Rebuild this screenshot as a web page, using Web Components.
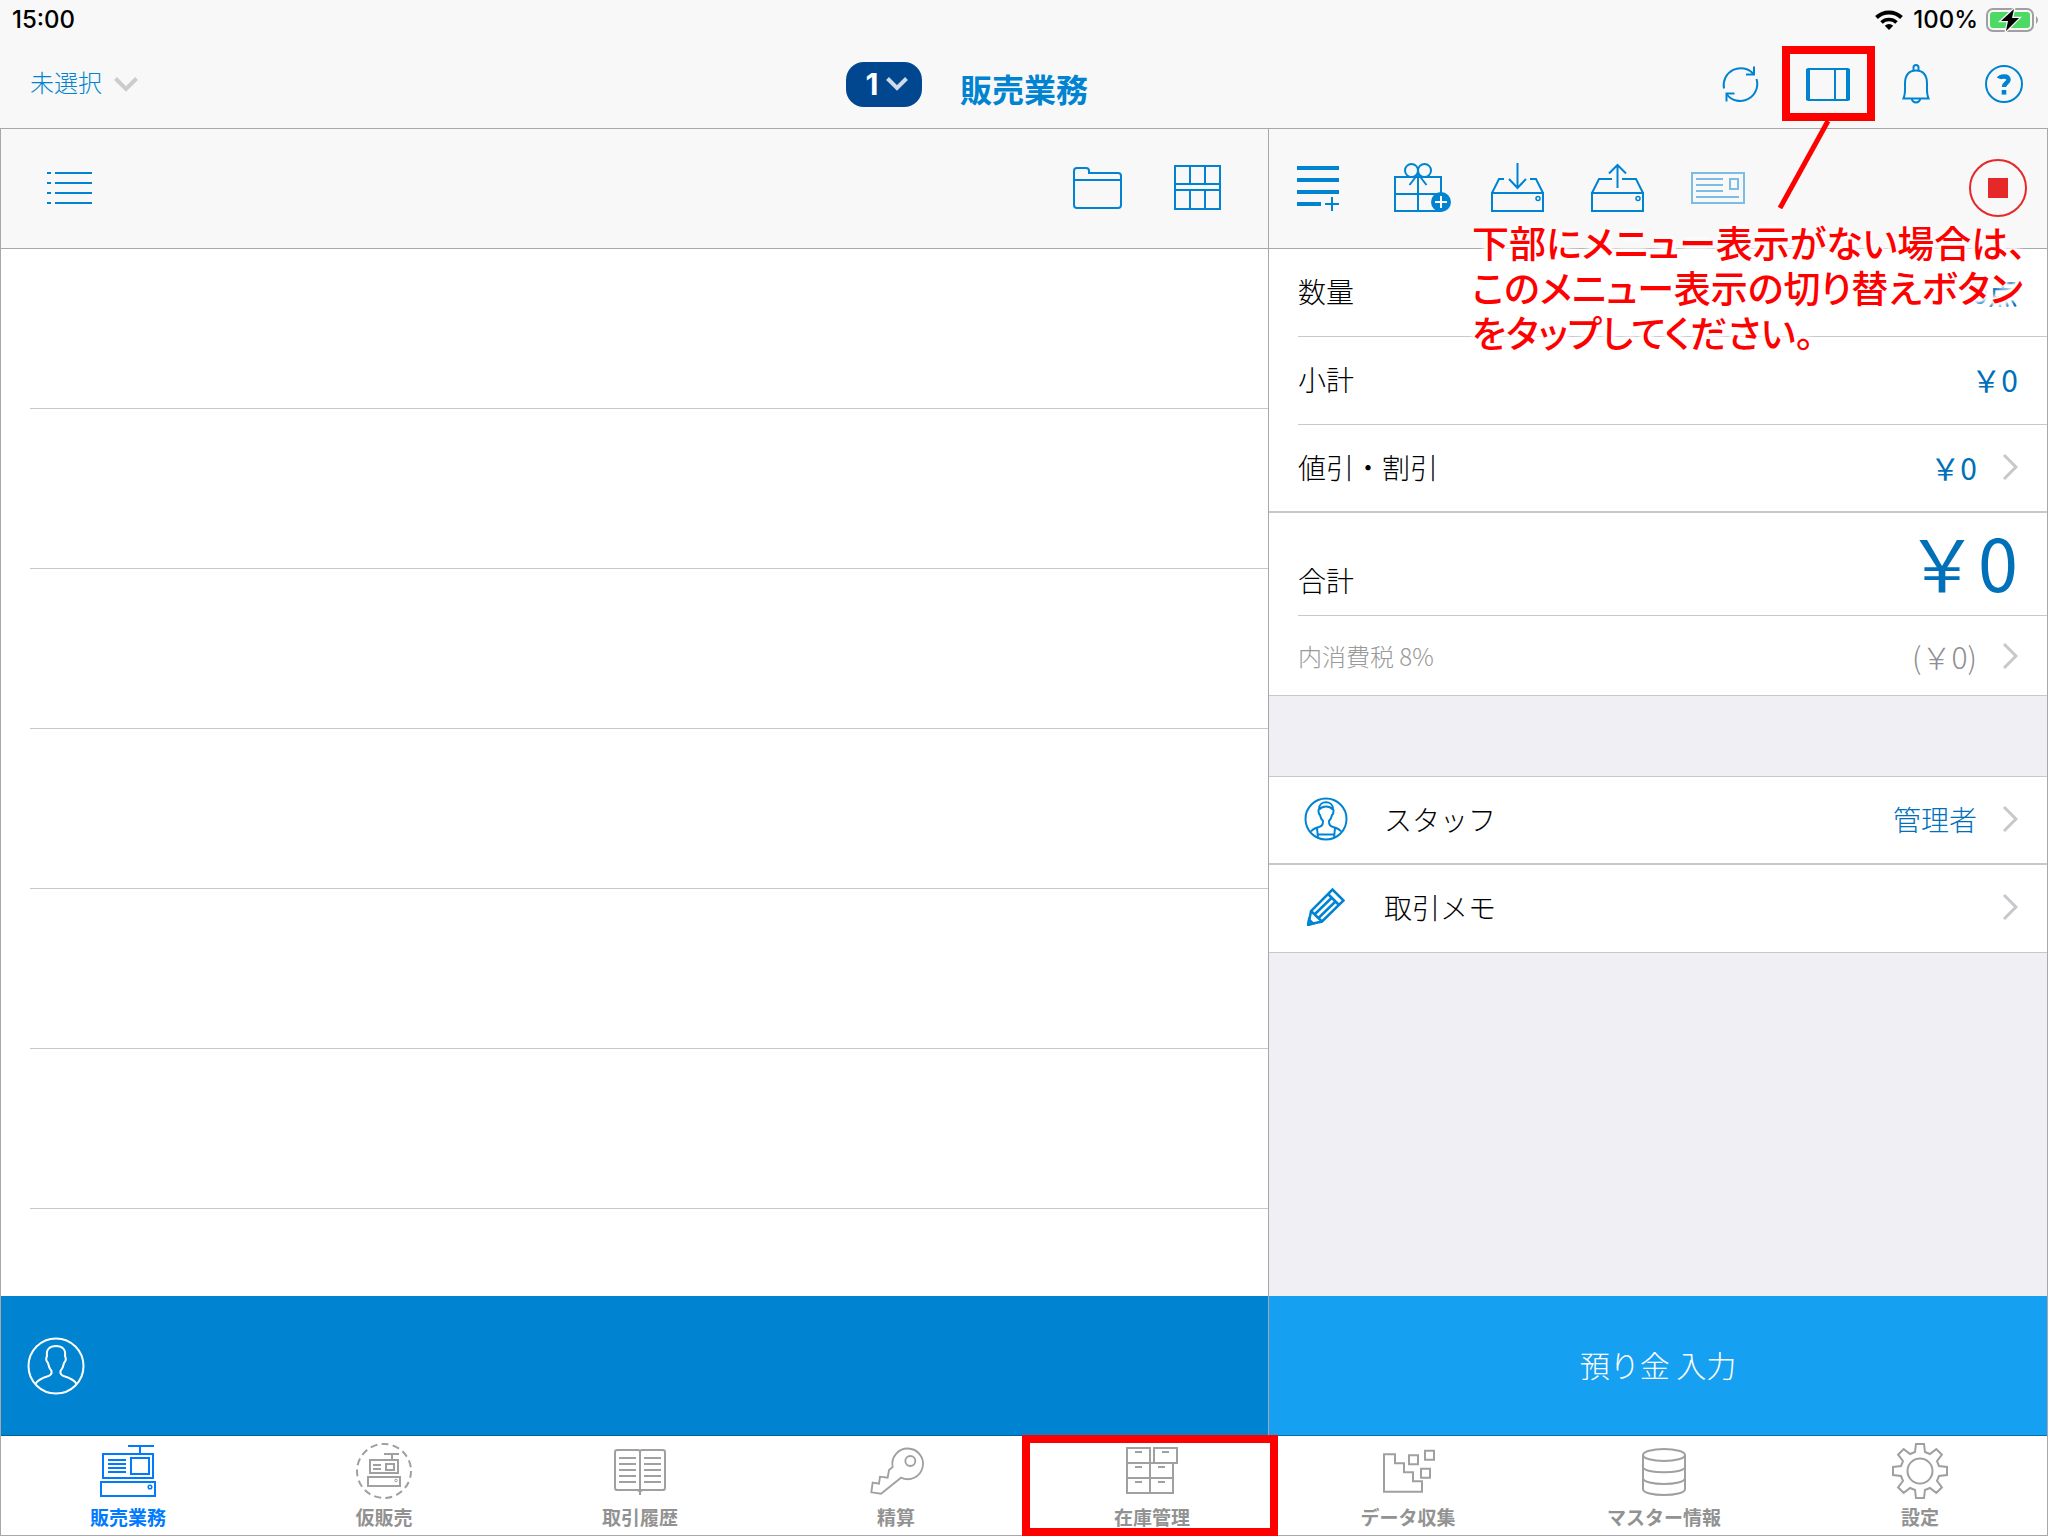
<!DOCTYPE html>
<html lang="ja">
<head>
<meta charset="utf-8">
<meta name="viewport" content="width=device-width, initial-scale=1">
<title>販売業務</title>
<style>
  html, body { margin: 0; height: 100%; }
  body {
    --blue: #0084d1;
    --value: #0070b8;
    --frame: #a8a8aa;
    --line: #c8c7cc;
    --bar: #f8f8f8;
    --ui: Inter, "Noto Sans CJK JP", sans-serif;
    font-family: "Noto Sans CJK JP", sans-serif;
    color: #000;
    background: #fff;
  }
</style>
</head>
<body>
<pos-app></pos-app>

<script>
const gear = (() => {
  const tooth = [[-5, -19], [-4, -27], [4, -27], [5, -19]];
  const pts = [];
  for (let k = 0; k < 8; k++) {
    const a = k * Math.PI / 4, c = Math.cos(a), s = Math.sin(a);
    for (const [x, y] of tooth) pts.push((30 + x * c - y * s).toFixed(1) + ',' + (30 + x * s + y * c).toFixed(1));
  }
  return pts.join(' ');
})();

const svg = (w, h, body, opt = '') =>
  `<svg width="${w}" height="${h}" ${/viewBox/.test(opt) ? '' : `viewBox="0 0 ${w} ${h}"`} fill="none" stroke="currentColor" stroke-width="2" ${opt} aria-hidden="true">${body}</svg>`;

const ICONS = {
  chevronDown: svg(24, 16, '<path d="M1.500 2.500 12 13 22.500 2.500" stroke-width="4"/>'),
  chevronSmall: svg(22, 16, '<path d="M1.500 2.500 11 12 20.500 2.500" stroke-width="4"/>'),
  chevronRight: svg(16, 28, '<path d="M2 2 14 14 2 26" stroke-width="3"/>'),
  wifi: svg(28, 20, '<path d="M1.500 7.500a18 18 0 0 1 25 0" stroke-width="4"/><path d="M6.500 12.500a11 11 0 0 1 15 0" stroke-width="3.600"/><path d="M14 20 9.800 15.700a6 6 0 0 1 8.400 0z" fill="currentColor" stroke="none"/>'),
  battery: svg(54, 24, '<rect x="1" y="1" width="46" height="22" rx="6" stroke="#a0a0a2"/><rect x="4" y="4" width="40" height="16" rx="3" fill="#4cd964" stroke="none"/><path d="M50 8a5 5 0 0 1 0 8z" fill="#a0a0a2" stroke="none"/><path d="M28 1 15 13h7l-2 10L33 10h-7z" fill="#000" stroke="#f8f8f8" stroke-width="2.500" paint-order="stroke"/>'),
  refresh: svg(40, 40, '<path d="M4 24.500A17 17 0 0 1 33.500 10"/><path d="M36.500 15A17 17 0 0 1 6.500 30"/><path d="M34 2.500v8h-8"/><path d="M6.500 37.500v-8h8"/>'),
  panel: svg(44, 33, '<rect x="1" y="1" width="42" height="31" rx="1.500"/><path d="M2 1v31M42 1v31" stroke-width="4"/><path d="M29 1v31"/>'),
  bell: svg(28, 40, '<path d="M1.500 34.500C3.500 30 3 27 3 20 3 11 7 6.500 14 6.500S25 11 25 20c0 7-.500 10 1.500 14.500z"/><path d="M11.500 7V3.500a2.500 2.500 0 0 1 5 0V7"/><path d="M9.800 35a4.300 4.300 0 0 0 8.400 0"/>'),
  help: svg(38, 38, '<circle cx="19" cy="19" r="18"/><path d="M14 13.500c1-2.500 9.500-3.500 9.500 1.200 0 3.500-4.500 3.300-4.500 7.300" stroke-width="4.500"/><path d="M16.700 25h4.600v4.600h-4.600z" fill="currentColor" stroke="none"/>'),
  list: svg(45, 32, '<path d="M0 1h4M8 1h37M0 11h4M8 11h37M0 21h4M8 21h37M0 31h4M8 31h37"/>'),
  folder: svg(49, 42, '<path d="M1 13V4a3 3 0 0 1 3-3h9a3 3 0 0 1 3 3v2h29a3 3 0 0 1 3 3v29a3 3 0 0 1-3 3H4a3 3 0 0 1-3-3zM1 13h47"/>'),
  grid: svg(47, 45, '<path d="M1 1h45v43H1zM1 19h45M1 25h45M16 1v18M31 1v18M16 25v19M31 25v19"/>'),
  listPlus: svg(44, 46, '<path d="M0 3h42M0 15h42M0 27h42M0 39h24" stroke-width="4"/><path d="M28 39h14M35 32v14"/>'),
  gift: svg(68, 50, '<path d="M10 14h46v34H10zM10 31h46M33 14v34"/><circle cx="26.500" cy="7.500" r="6.500"/><circle cx="39.500" cy="7.500" r="6.500"/><path d="M33 11 24.500 22M33 11l8.500 11"/><circle cx="56" cy="39" r="10" fill="currentColor" stroke="none"/><path d="M50 39h12M56 33v12" stroke="#fff"/>'),
  drawerIn: svg(56, 50, '<path d="M1 30h51v18H1zM1 30 8 16h5M52 30 45 16h-6M26.500 0v25M18 16l8.500 9 8.500-9"/><circle cx="47" cy="35.500" r="2" stroke-width="1.500"/>'),
  drawerOut: svg(56, 50, '<path d="M1 30h51v18H1zM1 30 8 16h13M52 30 45 16H31M26.500 25V2M18 10.500 26.500 2l8.500 8.500"/><circle cx="47" cy="35.500" r="2" stroke-width="1.500"/>'),
  receipt: svg(56, 32, '<path d="M1 1h52v30H1zM5 7h27M5 13h27M5 19h27M5 25h43M39 7h8v10h-8z"/>'),
  stop: svg(58, 58, '<circle cx="29" cy="29" r="28"/><path d="M19 19h20v20H19z" fill="currentColor" stroke="none"/>'),
  staff: svg(44, 44, '<circle cx="22" cy="22" r="20.500"/><path d="M15 12c0-9 14-9 14 0 1 1 .500 5-1 6-.500 3-2 5-3 6 0 4 1 5 4 6 5 1.500 7 2.500 8 4.500M15 12c-1 1-.500 5 1 6 .500 3 2 5 3 6 0 4-1 5-4 6-5 1.500-7 2.500-8 4.500M15 12.500c4-4 10-4 14 0M13 31l1 10M31 31l-1 10M13.500 37.500h17"/>'),
  pencil: svg(38, 38, '<path d="M1.500 36.500 4 23 25.500 1.500l11 11L15 33.500zM4 23l11 10.500M21 6l11 11M8 26 25 9.500M11.500 30 29 13"/><path d="m1 37 1-5.500 4 4z" fill="currentColor"/>', 'style="stroke-width:2.500"'),
  person: svg(58, 58, '<circle cx="29" cy="29" r="27.500"/><path d="M8.500 47c2-4 8-6.500 13-8 3-1.200 3.500-2.500 3-5-2-2.500-3-5-3.500-8-2-2-2-5-1-7-1-7 3-10 9-10s10 3 9 10c1 2 1 5-1 7-.500 3-1.500 5.500-3.500 8-.500 2.500 0 3.800 3 5 5 1.500 11 4 13 8"/>'),
  register: svg(60, 60, '<path d="M30 5h26M42 5v8M5 13h50v24H5zM10 19h18M10 23h18M10 27h18M10 31h18M33 17h18v16H33zM3 41h54v14H3z"/><circle cx="52" cy="46" r="1.800" stroke-width="1.500"/>'),
  hold: svg(60, 60, '<circle cx="30" cy="30" r="27" stroke-dasharray="7 4.300"/><path d="M30 13h15M38 13v6M16 19h28v13H16zM19 24h8M19 28h8M32 23h8v6h-8zM14 36h32v9H14z"/><circle cx="42" cy="39.500" r="1.300" stroke-width="1"/>'),
  book: svg(60, 60, '<path d="M237 225V96q0-6-6-6h-62q-7 0-7 7v106q0 7 7 7h136q7 0 7-7V97q0-7-7-7h-62q-6 0-6 6M230 212h14M174 114h51M174 132h51M174 150h51M174 168h51M174 186h51M249 114h51M249 132h51M249 150h51M249 168h51M249 186h51"/>', 'viewBox="147 63 180 180" style="stroke-width:6"'),
  key: svg(60, 60, '<path d="M1020 173 960 221 931 217 935 188 954 191 957 170 980 173 984 150 995 141A46 46 0 1 1 1020 173z"/><circle cx="1048" cy="123" r="15"/>', 'viewBox="915 63 180 180" style="stroke-width:5.500"'),
  cabinet: svg(60, 60, '<path d="M378 84h69v135h-69zM459 84h69v45h-69zM378 129h138v90H378zM378 174h138M402 96h21M483 96h21M402 141h21M471 141h21M402 186h21M471 186h21"/>', 'viewBox="363 63 180 180" style="stroke-width:6"'),
  data: svg(60, 60, '<path d="M1149 103h33v27h27v27h27v27h27v31h-114zM1224 106h27v27h-27zM1272 92h27v27h-27zM1260 146h27v27h-27z"/>', 'viewBox="1131 63 180 180" style="stroke-width:6"'),
  database: svg(60, 60, '<ellipse cx="30" cy="14" rx="21" ry="6"/><path d="M9 14v34c0 8 42 8 42 0V14M9 26c0 7 42 7 42 0M9 37c0 8 42 8 42 0"/>'),
  gear: svg(60, 60, `<polygon points="${gear}"/><circle cx="30" cy="30" r="12.500"/>`)
};

/* Base class: renders its static template into an open shadow root. */
class PosElement extends HTMLElement {
  connectedCallback() {
    if (this.shadowRoot) return;
    const tpl = document.createElement('template');
    tpl.innerHTML = `<style>
      :host { display: block; box-sizing: border-box; }
      *, ::before, ::after { box-sizing: border-box; }
      svg { display: block; flex: none; }
      button { margin: 0; padding: 0; border: 0; background: none; font: inherit; color: inherit; cursor: pointer; }
      ${this.css()}</style>${this.html()}`;
    this.attachShadow({ mode: 'open' }).append(tpl.content.cloneNode(true));
  }
  css() { return ''; }
  html() { return '<slot></slot>'; }
}

customElements.define('icon-button', class extends PosElement {
  css() { return `
    :host { position: relative; color: var(--blue); }
    button { display: flex; align-items: center; justify-content: center; width: 100%; height: 100%; }
    button:disabled { opacity: .5; cursor: default; }
    :host([marked])::after { content: ""; position: absolute; inset: 6px -3px 7px -2px; border: 8px solid #f00; pointer-events: none; }`; }
  html() { return `<button type="button" aria-label="${this.getAttribute('label')}" ${this.hasAttribute('disabled') ? 'disabled' : ''}>${ICONS[this.getAttribute('icon')]}</button>`; }
});

customElements.define('status-bar', class extends PosElement {
  css() { return `
    :host { display: flex; justify-content: space-between; align-items: center; height: 40px; padding: 0 8px 0 12px; font: 500 24px/40px var(--ui); }
    div { display: flex; align-items: center; gap: 8px; }
    .power { gap: 10px; }`; }
  html() { return `<span>15:00</span><div class="power">${ICONS.wifi}<div><span>100%</span>${ICONS.battery}</div></div>`; }
});

customElements.define('nav-bar', class extends PosElement {
  css() { return `
    :host { display: grid; grid-template-columns: 1fr auto 1fr; height: 88px; color: var(--blue); }
    .start { display: flex; justify-content: space-between; align-items: center; padding: 0 38px 0 30px; }
    .customer { display: flex; align-items: center; gap: 12px; font-size: 24px; line-height: 32px; font-weight: var(--text); }
    .customer span { padding-bottom: 4px; }
    .customer svg { color: #ccc; }
    .slot { display: flex; align-items: center; justify-content: center; gap: 8px; width: 76px; height: 45px; padding-left: 6px; border-radius: 18px; background: #00478f; color: #fff; font: 700 30px/45px var(--ui); }
    .slot svg { color: #ccdae9; }
    h1 { margin: 0; padding-top: 10px; font-size: 32px; line-height: 76px; font-weight: 700; }
    nav { display: flex; justify-content: flex-end; }
    icon-button { width: 88px; }`; }
  html() { return `
    <div class="start">
      <button class="customer" type="button"><span>未選択</span>${ICONS.chevronDown}</button>
      <button class="slot" type="button"><span>1</span>${ICONS.chevronSmall}</button>
    </div>
    <h1>販売業務</h1>
    <nav>
      <icon-button icon="refresh" label="更新"></icon-button>
      <icon-button icon="panel" label="メニュー表示" marked></icon-button>
      <icon-button icon="bell" label="通知"></icon-button>
      <icon-button icon="help" label="ヘルプ"></icon-button>
    </nav>`; }
});

customElements.define('tool-bar', class extends PosElement {
  css() { return `
    :host { display: flex; height: 120px; padding-bottom: 2px; background: var(--bar); border-bottom: 1px solid var(--frame); }`; }
});

customElements.define('sale-panel', class extends PosElement {
  css() { return `
    :host { display: flex; flex-direction: column; }
    tool-bar { padding: 0 21px 2px 18px; }
    icon-button { width: 100px; }
    .first { margin-right: auto; }
    ul { flex: 1; margin: 0; padding: 0 0 0 29px; list-style: none; background: #fff; overflow: hidden; }
    li { height: 160px; border-bottom: 1px solid var(--line); }
    footer { display: flex; align-items: center; height: 140px; padding-left: 26px; background: var(--blue); border-bottom: 1px solid #005f9c; }
    footer icon-button { width: 58px; color: #fff; }`; }
  html() { return `
    <tool-bar>
      <icon-button class="first" icon="list" label="リスト"></icon-button>
      <icon-button icon="folder" label="フォルダ"></icon-button>
      <icon-button icon="grid" label="グリッド"></icon-button>
    </tool-bar>
    <ul>${'<li></li>'.repeat(6)}</ul>
    <footer><icon-button icon="person" label="顧客"></icon-button></footer>`; }
});

customElements.define('summary-row', class extends PosElement {
  css() { return `
    :host { height: 88px; padding-left: 29px; background: #fff; font-size: 28px; line-height: 40px; font-weight: var(--text); }
    .row { display: flex; align-items: center; height: 100%; padding: 0 29px 3px 0; border-bottom: 1px solid var(--line); }
    .icon { display: flex; justify-content: center; width: 56px; margin-right: 30px; color: var(--blue); }
    .value { margin-left: auto; color: var(--value); }
    .num { font-size: 30px; font-weight: 400; }
    .next { margin-left: 25px; color: #c7c7cc; }
    :host([rule="thick"]) { border-bottom: 2px solid var(--line); }
    :host([rule="full"]) { border-bottom: 1px solid var(--line); }
    :host([rule]) .row { border-bottom: 0; }
    :host([total]) { height: 103px; }
    :host([total]) .row { align-items: baseline; padding-top: 12px; }
    :host([total]) .value { font-size: 72px; line-height: 72px; }
    :host([tax]) { height: 80px; }
    :host([tax]) .row { padding-top: 3px; color: #999; font-size: 24px; }
    :host([tax]) .value { color: #8e8e93; font-weight: var(--text); }`; }
  html() {
    const a = n => this.getAttribute(n);
    return `<div class="row">
      ${a('icon') ? `<span class="icon">${ICONS[a('icon')]}</span>` : ''}
      <span><slot></slot></span>
      <span class="value ${/[0-9]/.test(a('value')) ? 'num' : ''}">${a('value') || ''}</span>
      ${this.hasAttribute('more') ? `<span class="next">${ICONS.chevronRight}</span>` : ''}
    </div>`;
  }
});

customElements.define('menu-hint', class extends PosElement {
  css() { return `
    :host { position: absolute; top: 91px; left: 203px; z-index: 2; pointer-events: none; color: #f00; }
    p { margin: 0; font-size: 37px; line-height: 45px; font-weight: 500; white-space: nowrap; font-feature-settings: "palt";
        text-shadow: 0 0 3px #fff, 0 0 3px #fff, 0 0 4px #fff, 0 0 4px #fff, 0 0 6px #fff, 0 0 6px #fff, 0 0 6px #fff, 0 0 8px #fff, 0 0 8px #fff, 0 0 8px #fff; }
    svg { position: absolute; left: 300px; top: -101px; }`; }
  html() { return `${svg(60, 92, '<path d="M56 2 8 89" stroke-width="5"/>')}<p><slot></slot></p>`; }
});

customElements.define('order-panel', class extends PosElement {
  css() { return `
    :host { position: relative; display: flex; flex-direction: column; border-left: 1px solid var(--frame); background: #efeff4; }
    tool-bar icon-button { width: 100px; }
    tool-bar .stop { width: 98px; margin-left: auto; color: #e62829; }
    .people { margin-top: 80px; border-top: 1px solid var(--line); }
    .pay { height: 140px; margin-top: auto; padding-bottom: 4px; background: #16a0f1; border-bottom: 1px solid #0b6fae; color: #fff; font-size: 30px; font-weight: var(--text); }`; }
  html() { return `
    <tool-bar>
      <icon-button icon="listPlus" label="項目追加"></icon-button>
      <icon-button icon="gift" label="ギフト"></icon-button>
      <icon-button icon="drawerIn" label="入金"></icon-button>
      <icon-button icon="drawerOut" label="出金"></icon-button>
      <icon-button icon="receipt" label="レシート" disabled></icon-button>
      <icon-button class="stop" icon="stop" label="中止"></icon-button>
    </tool-bar>
    <summary-row value="0点">数量</summary-row>
    <summary-row value="￥0">小計</summary-row>
    <summary-row value="￥0" more rule="thick">値引・割引</summary-row>
    <summary-row value="￥0" total>合計</summary-row>
    <summary-row value="(￥0)" more tax rule="full">内消費税 8%</summary-row>
    <div class="people">
      <summary-row icon="staff" value="管理者" more rule="thick">スタッフ</summary-row>
      <summary-row icon="pencil" value="" more rule="full">取引メモ</summary-row>
    </div>
    <button class="pay" type="button">預り金 入力</button>
    <menu-hint>下部にメニュー表示がない場合は、<br>このメニュー表示の切り替えボタン<br>をタップしてください。</menu-hint>`; }
});

customElements.define('tab-item', class extends PosElement {
  css() { return `
    :host { position: relative; flex: 1; color: #929292; }
    button { display: flex; flex-direction: column; align-items: center; gap: 3px; width: 100%; height: 100%; padding-top: 5px; font-size: 19px; line-height: 26px; font-weight: 700; }
    svg { color: #a0a0a0; }
    :host([active]), :host([active]) svg { color: #007aff; }
    :host([marked])::after { content: ""; position: absolute; inset: -1px 2px 0 -2px; border: 8px solid #f00; pointer-events: none; }`; }
  html() { return `<button type="button">${ICONS[this.getAttribute('icon')]}<span><slot></slot></span></button>`; }
});

customElements.define('tab-bar', class extends PosElement {
  css() { return `:host { display: flex; height: 100px; background: #fff; box-shadow: inset 1px -1px var(--frame), inset -1px 0 var(--frame); }`; }
});

customElements.define('pos-app', class extends PosElement {
  css() { return `
    :host { display: flex; flex-direction: column; min-height: 100vh; background: var(--bar); --text: 300; }
    main { flex: 1; display: grid; grid-template-columns: minmax(0, 1fr) 779px; border: solid var(--frame); border-width: 1px 1px 0; }`; }
  html() { return `
    <status-bar></status-bar>
    <nav-bar></nav-bar>
    <main><sale-panel></sale-panel><order-panel></order-panel></main>
    <tab-bar>
      <tab-item icon="register" active>販売業務</tab-item>
      <tab-item icon="hold">仮販売</tab-item>
      <tab-item icon="book">取引履歴</tab-item>
      <tab-item icon="key">精算</tab-item>
      <tab-item icon="cabinet" marked>在庫管理</tab-item>
      <tab-item icon="data">データ収集</tab-item>
      <tab-item icon="database">マスター情報</tab-item>
      <tab-item icon="gear">設定</tab-item>
    </tab-bar>`; }
});
</script>
</body>
</html>
